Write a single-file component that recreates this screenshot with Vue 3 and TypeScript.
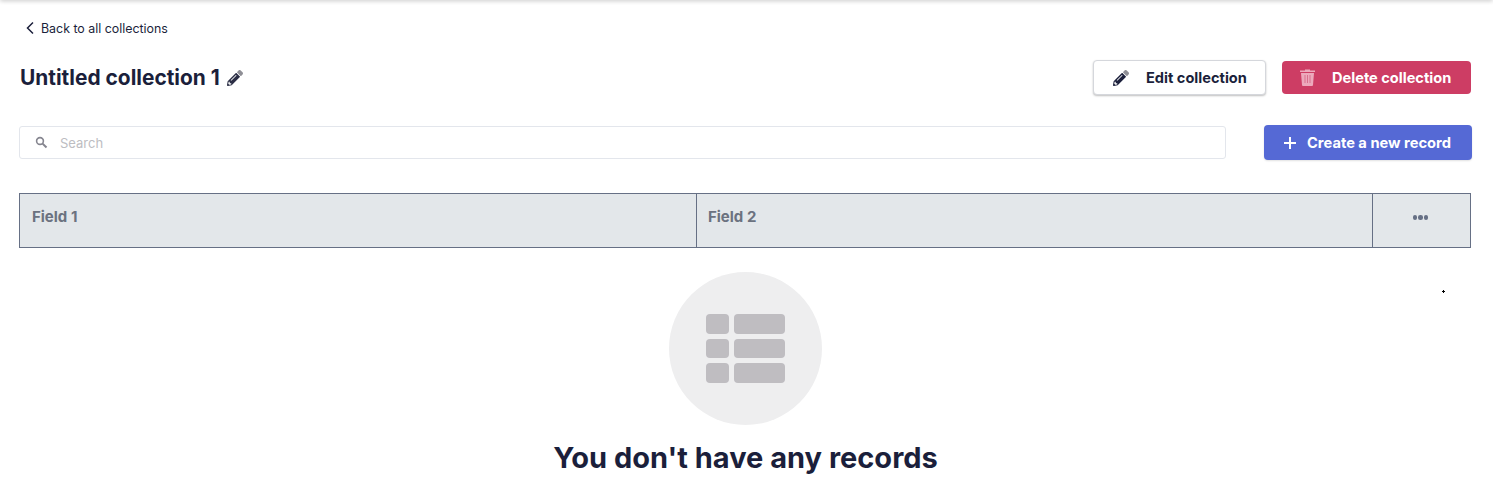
<script setup lang="ts">
const fields: string[] = ['Field 1', 'Field 2']
const pencilCap =
  'M497.9 142.1l-46.1 46.1c-4.7 4.7-12.3 4.7-17 0l-111-111c-4.7-4.7-4.7-12.3 0-17l46.1-46.1c18.7-18.7 49.1-18.7 67.9 0l60.1 60.1c18.8 18.7 18.8 49.1 0 67.9z'
const pencilBody =
  'M284.2 99.8L21.6 362.4.4 483.9c-2.9 16.4 11.4 30.6 27.8 27.8l121.5-21.3 262.6-262.6c4.7-4.7 4.7-12.3 0-17l-111-111c-4.8-4.7-12.4-4.7-17.1 0zM124.1 339.9c-5.5-5.5-5.5-14.3 0-19.8l154-154c5.5-5.5 14.3-5.5 19.8 0s5.5 14.3 0 19.8l-154 154c-5.5 5.5-14.3 5.5-19.8 0zM88 424h48v36.3l-64.5 11.3-31.1-31.1L51.7 376H88v48z'
</script>

<template>
  <div class="page">
    <a class="back">
      <svg width="10" height="14" viewBox="0 0 10 14"><path d="M8 1.5 2.5 7 8 12.5" fill="none" stroke="#1b1f3b" stroke-width="1.5" /></svg>
      Back to all collections
    </a>

    <header class="title-row">
      <h1>Untitled collection 1</h1>
      <svg class="title-pencil" width="16" height="16" viewBox="0 0 512 512">
        <path :d="pencilCap" fill="#8f8f96" />
        <path :d="pencilBody" fill="#2b2e45" />
      </svg>
      <div class="actions">
        <button class="btn edit">
          <svg width="16" height="16" viewBox="0 0 512 512">
            <path :d="pencilCap" fill="#8f8f96" />
            <path :d="pencilBody" fill="#1b1f3b" />
          </svg>
          Edit collection
        </button>
        <button class="btn delete">
          <svg width="15" height="17" viewBox="0 0 15 17">
            <path d="M5 1.5V.5h5v1h5V3H0V1.5z" fill="#eda9bc" />
            <path d="M1 4h13l-1 12a1 1 0 0 1-1 1H3a1 1 0 0 1-1-1z" fill="#eda9bc" />
            <path d="M5 6v8M7.5 6v8M10 6v8" stroke="#d9708e" stroke-width="1" />
          </svg>
          Delete collection
        </button>
      </div>
    </header>

    <div class="search-row">
      <label class="search">
        <svg width="13" height="13" viewBox="0 0 13 13"><circle cx="5" cy="5" r="3.4" fill="none" stroke="#85858f" stroke-width="1.6" /><path d="M7.6 7.6 11.5 11.5" stroke="#85858f" stroke-width="2" /></svg>
        <input type="text" placeholder="Search" />
      </label>
      <button class="btn create">
        <svg width="14" height="14" viewBox="0 0 14 14"><path d="M7 1v12M1 7h12" stroke="#fff" stroke-width="2" /></svg>
        Create a new record
      </button>
    </div>

    <div class="table-head">
      <div v-for="f in fields" :key="f" class="cell">{{ f }}</div>
      <div class="cell more"><span></span><span></span><span></span></div>
    </div>

    <section class="empty">
      <div class="empty-circle">
        <div class="empty-grid">
          <i v-for="n in 6" :key="n"></i>
        </div>
      </div>
      <h2>You don't have any records</h2>
    </section>

    <svg class="cursor-speck" width="3" height="3" viewBox="0 0 3 3"><path d="M1 0h1v1h1v1H2v1H1V2H0V1h1z" fill="#000" /></svg>
  </div>
</template>

<style scoped>
.page {
  position: relative;
  height: 479px;
  overflow: hidden;
  box-sizing: border-box;
  padding: 18px 22px 0 19px;
  font-family: Inter, "Open Sans", sans-serif;
  color: #1b1f3b;
  background: #fff;
}
.page::before {
  content: "";
  position: absolute;
  left: 0;
  right: 0;
  top: -4px;
  height: 4px;
  box-shadow: 0 1px 4px rgba(0, 0, 0, 0.22);
}
.back {
  display: flex;
  align-items: center;
  gap: 6px;
  height: 20px;
  padding-left: 6px;
  font-size: 12.4px;
}
.title-row {
  display: flex;
  align-items: center;
  margin-top: 22px;
  height: 35px;
}
h1 {
  margin: 0 0 1px 1px;
  font-size: 20.9px;
  font-weight: 650;
}
.title-pencil {
  margin-left: 7px;
}
.actions {
  margin-left: auto;
  display: flex;
  align-items: center;
  gap: 16px;
}
.btn {
  display: flex;
  align-items: center;
  box-sizing: border-box;
  border: 0;
  border-radius: 4px;
  font-family: inherit;
  font-size: 14.6px;
  font-weight: 650;
}
.edit {
  width: 173px;
  height: 35px;
  gap: 17px;
  padding-left: 19px;
  background: #fff;
  color: #1b1f3b;
  border: 1px solid #d5d7dc;
  box-shadow: 0 1px 2px rgba(0, 0, 0, 0.25);
}
.delete {
  width: 189px;
  height: 33px;
  gap: 17px;
  padding-left: 18px;
  background: #cd3d64;
  color: #fff;
}
.search-row {
  display: flex;
  align-items: center;
  justify-content: space-between;
  margin-top: 30px;
  margin-right: -1px;
}
.search {
  display: flex;
  align-items: center;
  gap: 12px;
  box-sizing: border-box;
  width: 1207px;
  height: 33px;
  padding-left: 15px;
  border: 1px solid #e3e6ec;
  border-radius: 3px;
}
.search input {
  flex: 1;
  border: 0;
  outline: 0;
  padding: 0;
  font-family: inherit;
  font-size: 13px;
}
.search input::placeholder {
  color: #bdbdc2;
}
.create {
  width: 208px;
  height: 35px;
  gap: 10px;
  padding-left: 19px;
  background: #5569d5;
  color: #fff;
  font-size: 14.7px;
  box-shadow: 0 1px 2px rgba(0, 0, 0, 0.12);
}
.table-head {
  display: grid;
  grid-template-columns: 677px 676px 1fr;
  box-sizing: border-box;
  height: 55px;
  margin-top: 33px;
  border: 1px solid #667085;
  background: #e3e7ea;
}
.cell {
  padding: 13px 11px 0 12px;
  font-size: 15px;
  font-weight: 700;
  color: #6b7280;
  border-right: 1px solid #667085;
}
.cell + .cell {
  padding-left: 11px;
}
.cell.more {
  display: flex;
  justify-content: center;
  gap: 1px;
  padding: 21px 2px 0 0;
  border-right: 0;
}
.more span {
  width: 4.5px;
  height: 4.5px;
  border-radius: 50%;
  background: #667085;
}
.empty {
  display: flex;
  flex-direction: column;
  align-items: center;
  margin-top: 24px;
  margin-right: -1px;
}
.empty-circle {
  display: flex;
  align-items: center;
  justify-content: center;
  width: 153px;
  height: 153px;
  border-radius: 50%;
  background: #eeeeef;
}
.empty-grid {
  display: grid;
  grid-template-columns: 23px 51px;
  grid-auto-rows: 19.5px;
  gap: 5px;
  margin-right: 1px;
}
.empty-grid i {
  border-radius: 4px;
  background: #bfbdc1;
}
h2 {
  margin: 13px 0 0;
  font-size: 29px;
  line-height: 40px;
  font-weight: 650;
}
.cursor-speck {
  position: absolute;
  left: 1442px;
  top: 290px;
}
</style>
